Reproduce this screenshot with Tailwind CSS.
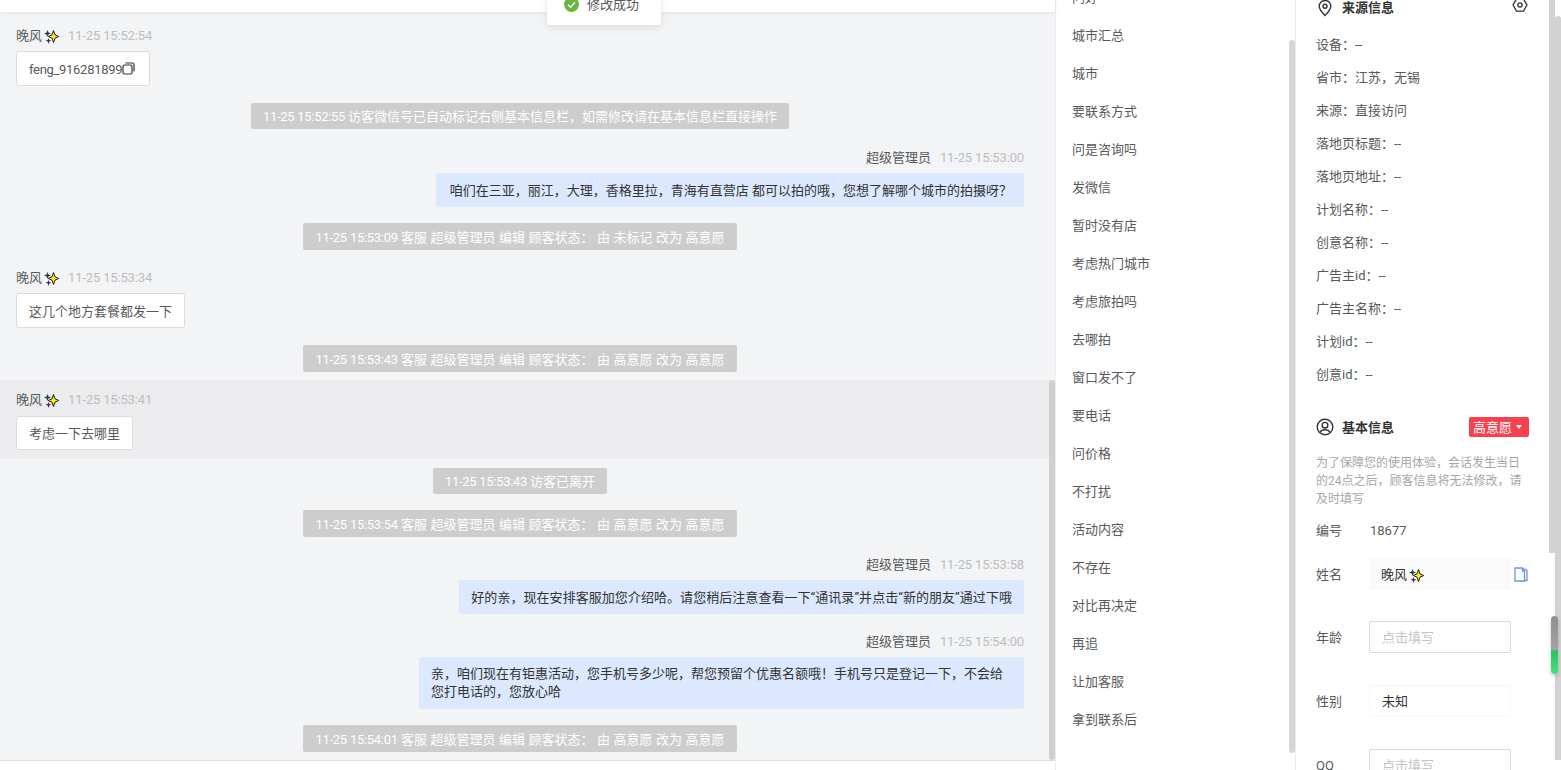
<!DOCTYPE html>
<html lang="zh">
<head>
<meta charset="utf-8">
<script src="https://cdn.jsdelivr.net/npm/@tailwindcss/browser@4"></script>
</head>
<body class="m-0 bg-white font-['Roboto','Noto_Sans_CJK_SC',sans-serif] text-[13px] text-[#595959]">
<svg width="0" height="0" class="absolute">
  <defs>
    <symbol id="spark" viewBox="0 0 15 15">
      <path d="M9.500 1.500l1.500 4.300 3.700 1.700-3.700 1.700-1.500 4.300L8 9.200 4.300 7.500 8 5.800z" fill="#fbe91d" stroke="#1c1c1c" stroke-width="1"/>
      <path d="M3.500 1l1 2.500 2.500 1-2.500 1-1 2.500-1-2.500L0 4.500l2.500-1z" fill="#24414d"/>
      <path d="M4.500 9l.8 2 2.200.8-2.200.8-.8 2.400-.8-2.400-2.200-.8 2.200-.8z" fill="#46285e"/>
    </symbol>
  </defs>
</svg>
<div class="relative flex h-[770px] w-[1561px] overflow-hidden">

  <!-- chat -->
  <main class="relative flex h-full w-[1055px] shrink-0 flex-col bg-[#f3f4f6]">
    <div class="z-10 h-[12px] shrink-0 bg-white shadow-[0_1px_4px_rgba(0,0,0,0.08)]"></div>
    <div class="h-[748px] shrink-0 overflow-hidden pt-[15px]">
      <div class="px-4">
        <div class="flex h-[16px] items-center gap-[2px] pt-[2px] leading-[16px]"><span>晚风</span><svg class="h-[15px] w-[15px]"><use href="#spark"/></svg><span class="ml-[7px] tracking-[-0.15px] text-[#bdbdbd]">11-25 15:52:54</span></div>
        <div class="mt-[8px] flex h-[35px] w-[134px] items-center rounded-[3px] border border-[#dcdcdc] bg-white pl-3 pt-[2px]"><span class="tracking-[-0.3px]">feng_916281899</span><svg class="mb-[2px] h-[13px] w-[13px] text-[#333]" viewBox="0 0 13 13" fill="none" stroke="currentColor" stroke-width="1.200"><rect x="1" y="3" width="9" height="9" rx="1.500"/><path d="M3.500 1h7a1.500 1.500 0 0 1 1.500 1.500v7"/></svg></div>
      </div>
      <div class="mt-[17px] flex justify-center pr-[15px]"><div class="flex h-[26px] items-center whitespace-pre rounded-[2px] bg-[#cdcdcd] px-3 pt-[2px] text-white antialiased"><span class="tracking-[-0.3px]">11-25 15:52:55 </span>访客微信号已自动标记右侧基本信息栏，如需修改请在基本信息栏直接操作</div></div>

      <div class="mt-[20px] flex h-[16px] items-center justify-end gap-[9px] pr-[31px] pt-[2px] leading-[16px]"><span>超级管理员</span><span class="tracking-[-0.15px] text-[#bdbdbd]">11-25 15:53:00</span></div>
      <div class="mt-[8px] flex justify-end pr-[31px]"><div class="flex h-[34px] items-center rounded-[3px] bg-[#dbe8fd] pl-[14px] pr-3 pt-[1px] text-[#333]">咱们在三亚，丽江，大理，香格里拉，青海有直营店 都可以拍的哦，您想了解哪个城市的拍摄呀？</div></div>
      <div class="mt-[16px] flex justify-center pr-[15px]"><div class="flex h-[27px] items-center whitespace-pre rounded-[2px] bg-[#cdcdcd] px-3 pt-[2px] text-white antialiased [word-spacing:0.3px]"><span class="tracking-[-0.3px]">11-25 15:53:09 </span>客服 超级管理员 编辑 顾客状态： 由 未标记 改为 高意愿</div></div>

      <div class="mt-[19px] px-4">
        <div class="flex h-[16px] items-center gap-[2px] pt-[2px] leading-[16px]"><span>晚风</span><svg class="h-[15px] w-[15px]"><use href="#spark"/></svg><span class="ml-[7px] tracking-[-0.15px] text-[#bdbdbd]">11-25 15:53:34</span></div>
        <div class="mt-[8px] flex h-[35px] w-fit items-center rounded-[3px] border border-[#dcdcdc] bg-white px-3 pt-[2px]">这几个地方套餐都发一下</div>
      </div>
      <div class="mt-[17px] flex justify-center pr-[15px]"><div class="flex h-[27px] items-center whitespace-pre rounded-[2px] bg-[#cdcdcd] px-3 pt-[2px] text-white antialiased [word-spacing:0.3px]"><span class="tracking-[-0.3px]">11-25 15:53:43 </span>客服 超级管理员 编辑 顾客状态： 由 高意愿 改为 高意愿</div></div>

      <div class="mt-[8px] h-[79px] bg-[#ececee] px-4 pt-[11px]">
        <div class="flex h-[16px] items-center gap-[2px] pt-[2px] leading-[16px]"><span>晚风</span><svg class="h-[15px] w-[15px]"><use href="#spark"/></svg><span class="ml-[7px] tracking-[-0.15px] text-[#bdbdbd]">11-25 15:53:41</span></div>
        <div class="mt-[9px] flex h-[34px] w-fit items-center rounded-[3px] border border-[#dcdcdc] bg-white px-3 pt-[2px]">考虑一下去哪里</div>
      </div>
      <div class="mt-[9px] flex justify-center pr-[15px]"><div class="flex h-[26px] items-center whitespace-pre rounded-[2px] bg-[#cdcdcd] px-3 pt-[2px] text-white antialiased"><span class="tracking-[-0.3px]">11-25 15:53:43 </span>访客已离开</div></div>
      <div class="mt-[16px] flex justify-center pr-[15px]"><div class="flex h-[27px] items-center whitespace-pre rounded-[2px] bg-[#cdcdcd] px-3 pt-[2px] text-white antialiased [word-spacing:0.3px]"><span class="tracking-[-0.3px]">11-25 15:53:54 </span>客服 超级管理员 编辑 顾客状态： 由 高意愿 改为 高意愿</div></div>

      <div class="mt-[19px] flex h-[16px] items-center justify-end gap-[9px] pr-[31px] pt-[2px] leading-[16px]"><span>超级管理员</span><span class="tracking-[-0.15px] text-[#bdbdbd]">11-25 15:53:58</span></div>
      <div class="mt-[8px] flex justify-end pr-[31px]"><div class="flex h-[34px] items-center rounded-[3px] bg-[#dbe8fd] px-3 pt-[1px] tracking-[0.05px] text-[#333]">好的亲，现在安排客服加您介绍哈。请您稍后注意查看一下“通讯录”并点击“新的朋友”通过下哦</div></div>
      <div class="mt-[19px] flex h-[16px] items-center justify-end gap-[9px] pr-[31px] pt-[2px] leading-[16px]"><span>超级管理员</span><span class="tracking-[-0.15px] text-[#bdbdbd]">11-25 15:54:00</span></div>
      <div class="mt-[8px] flex justify-end pr-[31px]"><div class="h-[52px] w-[605px] rounded-[3px] bg-[#dbe8fd] px-3 py-[8px] leading-[18px] text-[#333]">亲，咱们现在有钜惠活动，您手机号多少呢，帮您预留个优惠名额哦！手机号只是登记一下，不会给您打电话的，您放心哈</div></div>
      <div class="mt-[16px] flex justify-center pr-[15px]"><div class="flex h-[27px] items-center whitespace-pre rounded-[2px] bg-[#cdcdcd] px-3 pt-[2px] text-white antialiased [word-spacing:0.3px]"><span class="tracking-[-0.3px]">11-25 15:54:01 </span>客服 超级管理员 编辑 顾客状态： 由 高意愿 改为 高意愿</div></div>
    </div>
    <div class="z-10 h-[10px] shrink-0 border-t border-[#dedede] bg-white"></div>
    <div class="absolute right-0 top-[380px] h-[380px] w-[6px] rounded-[3px] bg-[#cfcfcf]"></div>
    <!-- toast -->
    <div class="absolute left-[547px] top-[-17px] z-20 flex h-[42px] w-[114px] items-center gap-[8px] rounded-[4px] bg-white pl-[17px] shadow-[0_2px_10px_rgba(0,0,0,0.1)]">
      <svg class="h-[15px] w-[15px]" viewBox="0 0 15 15"><circle cx="7.500" cy="7.500" r="7.500" fill="#67b741"/><path d="M4 7.700l2.500 2.500L11 5.300" fill="none" stroke="#fff" stroke-width="1.500"/></svg>
      <span class="pt-[2px]">修改成功</span>
    </div>
  </main>

  <!-- middle list -->
  <section class="relative h-full w-[241px] shrink-0 overflow-hidden border-x border-[#ededed] bg-white text-[#595959]">
    <ul class="mt-[-21px] pl-[16px] leading-[38px]">
      <li class="h-[38px]">问好</li>
      <li class="h-[38px]">城市汇总</li>
      <li class="h-[38px]">城市</li>
      <li class="h-[38px]">要联系方式</li>
      <li class="h-[38px]">问是咨询吗</li>
      <li class="h-[38px]">发微信</li>
      <li class="h-[38px]">暂时没有店</li>
      <li class="h-[38px]">考虑热门城市</li>
      <li class="h-[38px]">考虑旅拍吗</li>
      <li class="h-[38px]">去哪拍</li>
      <li class="h-[38px]">窗口发不了</li>
      <li class="h-[38px]">要电话</li>
      <li class="h-[38px]">问价格</li>
      <li class="h-[38px]">不打扰</li>
      <li class="h-[38px]">活动内容</li>
      <li class="h-[38px]">不存在</li>
      <li class="h-[38px]">对比再决定</li>
      <li class="h-[38px]">再追</li>
      <li class="h-[38px]">让加客服</li>
      <li class="h-[38px]">拿到联系后</li>
    </ul>
    <div class="absolute right-0 top-[40px] h-[713px] w-[6px] rounded-[3px] bg-[#d6d6d6]"></div>
  </section>

  <!-- right panel -->
  <aside class="relative h-full w-[265px] shrink-0 overflow-hidden">
    <div class="h-full w-[253px] bg-white px-5 text-[#595959]">
      <div class="relative top-[-2px] flex h-[20px] items-center justify-between">
        <div class="flex items-center gap-[8px] font-bold text-[#333]">
          <svg class="h-[18px] w-[18px]" viewBox="0 0 18 18" fill="none" stroke="#333" stroke-width="1.400"><path d="M9 1.500c3.300 0 5.800 2.500 5.800 5.700 0 3.500-3.200 6.700-5.800 9.300-2.600-2.600-5.800-5.800-5.800-9.300C3.200 4 5.700 1.500 9 1.500z"/><circle cx="9" cy="7.200" r="2"/></svg>
          <span>来源信息</span>
        </div>
        <svg class="relative top-[-3px] mr-[1px] h-[16px] w-[16px]" viewBox="0 0 18 18" fill="none" stroke="#333" stroke-width="1.500"><path d="M5 2.200h8L16.800 9 13 15.800H5L1.200 9z"/><circle cx="9" cy="9" r="2.400"/></svg>
      </div>
      <div class="mt-[8px] leading-[33px]">
        <div>设备：--</div>
        <div>省市：江苏，无锡</div>
        <div>来源：直接访问</div>
        <div>落地页标题：--</div>
        <div>落地页地址：--</div>
        <div>计划名称：--</div>
        <div>创意名称：--</div>
        <div>广告主id：--</div>
        <div>广告主名称：--</div>
        <div>计划id：--</div>
        <div>创意id：--</div>
      </div>
      <div class="mt-[26px] flex h-[20px] items-center justify-between">
        <div class="flex items-center gap-[8px] font-bold text-[#333]">
          <svg class="h-[18px] w-[18px]" viewBox="0 0 18 18" fill="none" stroke="#333" stroke-width="1.400"><circle cx="9" cy="9" r="7.800"/><circle cx="9" cy="7.200" r="2.800"/><path d="M3.800 14.500c1.200-2 3-2.800 5.200-2.800s4 .8 5.200 2.800"/></svg>
          <span class="pt-[2px]">基本信息</span>
        </div>
        <div class="flex h-[20px] w-[60px] items-center gap-[4px] rounded-[2px] bg-[#f8414f] pl-1 pt-[2px] text-white">高意愿<span class="mb-[2px] h-0 w-0 border-x-[3.500px] border-t-[4px] border-x-transparent border-t-white"></span></div>
      </div>
      <p class="mt-[17px] w-[215px] text-[12px] leading-[18px] text-[#a6a6a6]">为了保障您的使用体验，会话发生当日的24点之后，顾客信息将无法修改，请及时填写</p>
      <div class="mt-[13px] flex h-[20px] items-center"><span class="w-[54px]">编号</span><span>18677</span></div>
      <div class="mt-[17px] flex h-[32px] items-center">
        <span class="w-[53px] pt-[2px]">姓名</span>
        <div class="flex h-[32px] w-[142px] items-center gap-[2px] rounded-[2px] bg-[#fafafa] pl-3 pt-[2px] text-[#333]">晚风<svg class="h-[15px] w-[15px]"><use href="#spark"/></svg></div>
        <svg class="ml-[3px] h-[15px] w-[14px]" viewBox="0 0 14 15" fill="none" stroke="#6d93e0" stroke-width="1.300"><path d="M1 1h7.500l2 2v11H1z"/><path d="M8.500 1v3h2M10.500 2.500h1.500l1 1.500v9.500h-2" /></svg>
      </div>
      <div class="mt-[31px] flex h-[32px] items-center">
        <span class="w-[53px] pt-[2px]">年龄</span>
        <div class="flex h-[32px] w-[142px] items-center rounded-[2px] border border-[#d9d9d9] pl-3 pt-[2px] text-[#c4c4c4]">点击填写</div>
      </div>
      <div class="mt-[32px] flex h-[32px] items-center">
        <span class="w-[53px] pt-[2px]">性别</span>
        <div class="flex h-[32px] w-[142px] items-center rounded-[2px] border border-[#f7f7f7] pl-3 pt-[2px] text-[#333]">未知</div>
      </div>
      <div class="mt-[32px] flex h-[32px] items-center">
        <span class="w-[53px] pt-[2px]">QQ</span>
        <div class="flex h-[32px] w-[142px] items-center rounded-[2px] border border-[#d9d9d9] pl-3 pt-[2px] text-[#c4c4c4]">点击填写</div>
      </div>
    </div>
    <div class="absolute left-[253px] top-0 h-[553px] w-[6px] bg-[#d2d2d2]"></div>
    <div class="absolute left-[259px] top-[16px] h-[744px] w-[6px] rounded-t-[3px] bg-[#d2d2d2]"></div>
    <div class="absolute left-[255px] top-[616px] h-[58px] w-[7px] rounded-[4px] bg-[linear-gradient(#8f8f8f_0,#a3a3a3_58%,#22c55e_60%,#4ade80_100%)] shadow-[0_2px_4px_rgba(0,0,0,0.2)]"></div>
  </aside>
</div>
</body>
</html>
